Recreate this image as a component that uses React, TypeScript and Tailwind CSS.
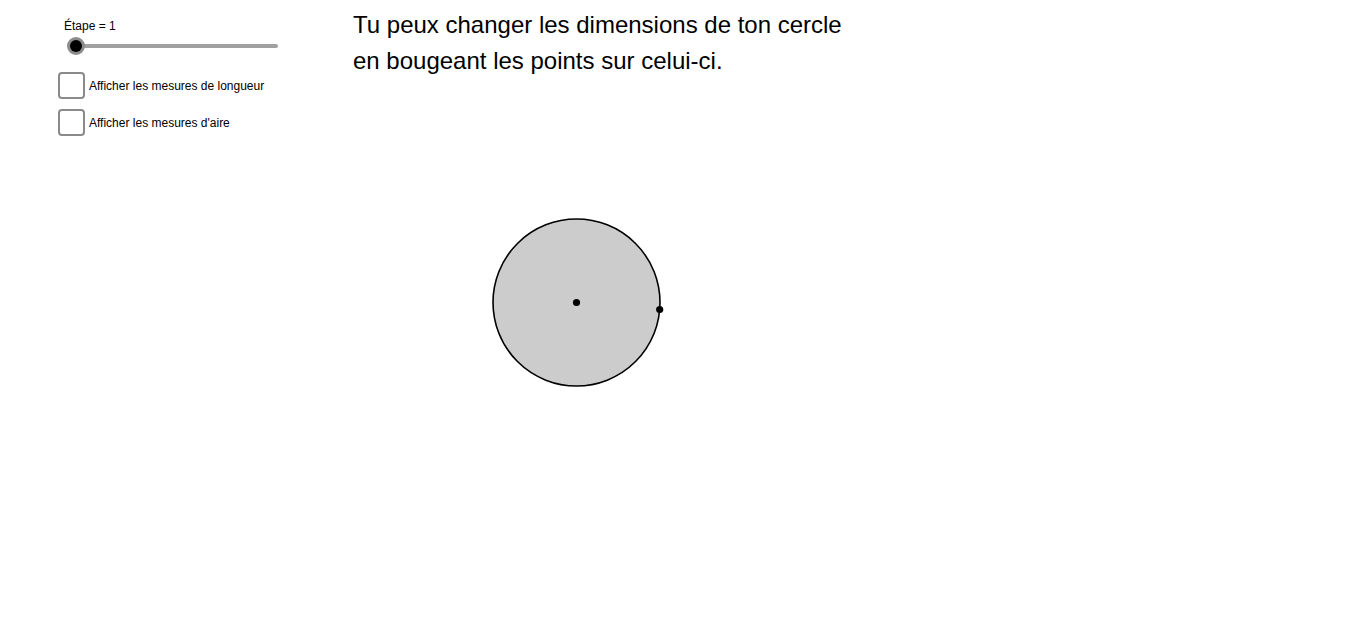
import React from 'react';

function Checkbox({ label }: { label: string }) {
  return (
    <div className="flex items-center gap-[4px]">
      <div className="h-[27px] w-[27px] rounded-[4px] border-2 border-[#8a8a8a] bg-white" />
      <span className="text-[12px] text-black">{label}</span>
    </div>
  );
}

function Slider() {
  return (
    <div className="relative ml-[9px] h-[18px] w-[211px]">
      <div className="absolute left-[6px] right-0 top-[7px] h-[4px] rounded-full bg-[#a0a0a0]" />
      <div className="absolute left-0 top-0 h-[18px] w-[18px] rounded-full bg-[#8c8c8c] p-[3px]">
        <div className="h-full w-full rounded-full bg-black" />
      </div>
    </div>
  );
}

export default function App() {
  return (
    <div
      className="relative h-[631px] w-[1366px] overflow-hidden bg-white text-black"
      style={{ fontFamily: '"Liberation Sans", Arial, sans-serif' }}
    >
      <div className="flex">
        <div className="flex w-[295px] flex-col pl-[58px] pt-[19px]">
          <div className="ml-[6px] text-[12px] leading-[14px]">Étape = 1</div>
          <div className="mt-[4px]">
            <Slider />
          </div>
          <div className="mt-[17px] flex flex-col gap-[10px]">
            <Checkbox label="Afficher les mesures de longueur" />
            <Checkbox label="Afficher les mesures d'aire" />
          </div>
        </div>
        <div className="pl-[58px] pt-[7px] text-[24px] leading-[36px]">
          <div>Tu peux changer les dimensions de ton cercle</div>
          <div>en bougeant les points sur celui-ci.</div>
        </div>
      </div>

      <svg className="absolute left-0 top-0" width="1366" height="631" viewBox="0 0 1366 631">
        <circle cx="576.5" cy="302.5" r="83.5" fill="#cccccc" stroke="#000" strokeWidth="1.6" />
        <circle cx="576.5" cy="302.5" r="3.6" fill="#000" />
        <circle cx="659.7" cy="309.5" r="3.6" fill="#000" />
      </svg>
    </div>
  );
}
